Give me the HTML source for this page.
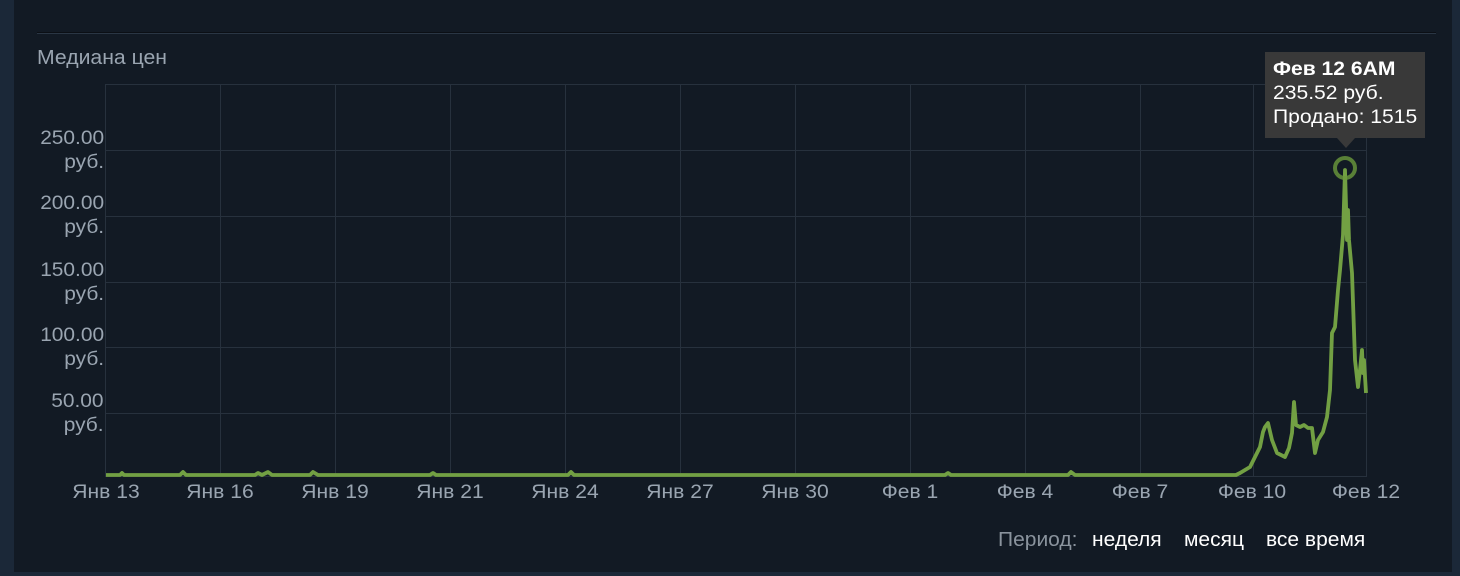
<!DOCTYPE html>
<html><head><meta charset="utf-8"><style>
html,body{margin:0;padding:0;width:1460px;height:576px;overflow:hidden;background:#1b2838;font-family:"Liberation Sans",sans-serif;}
#p{position:absolute;left:14px;top:0;width:1438px;height:572px;background:#121a24;}
#hr{position:absolute;left:37px;top:32px;width:1399px;height:1px;background:#2a3644;border-top:1px solid #0b0f15;}
.t{position:absolute;color:#9aa5b1;font-size:20px;white-space:nowrap;transform:scaleX(1.06);transform-origin:0 0;}
.yl{position:absolute;right:1356px;text-align:right;color:#9aa5b1;font-size:19px;line-height:24px;transform:scaleX(1.1);transform-origin:100% 0;}
.xl{position:absolute;top:482px;color:#9aa5b1;font-size:19px;transform:translateX(-50%) scaleX(1.11);white-space:nowrap;}
#tip{position:absolute;left:1265px;top:52px;width:160px;height:86px;background:#393939;box-sizing:border-box;padding:6px 8px;}
#tip div{color:#fff;font-size:19px;line-height:24px;white-space:nowrap;transform:scaleX(1.11);transform-origin:0 0;}
#arr{position:absolute;left:1337px;top:138px;width:0;height:0;border-left:9px solid transparent;border-right:9px solid transparent;border-top:10px solid #393939;}
.per{position:absolute;top:529px;font-size:20px;color:#fff;transform:scaleX(1.05);transform-origin:0 0;white-space:nowrap;}
</style></head><body>
<div id="p"></div>
<div id="hr"></div>
<div class="t" style="left:37px;top:47px;">Медиана цен</div>
<svg width="1460" height="576" style="position:absolute;left:0;top:0">
<g stroke="#27313d" stroke-width="1" fill="none">
<rect x="105.5" y="84.5" width="1261" height="392"/>
<line x1="105" y1="150.5" x2="1366" y2="150.5"/>
<line x1="105" y1="216.5" x2="1366" y2="216.5"/>
<line x1="105" y1="282.5" x2="1366" y2="282.5"/>
<line x1="105" y1="347.5" x2="1366" y2="347.5"/>
<line x1="105" y1="413.5" x2="1366" y2="413.5"/>
<line x1="220.5" y1="84" x2="220.5" y2="477"/>
<line x1="335.5" y1="84" x2="335.5" y2="477"/>
<line x1="450.5" y1="84" x2="450.5" y2="477"/>
<line x1="565.5" y1="84" x2="565.5" y2="477"/>
<line x1="680.5" y1="84" x2="680.5" y2="477"/>
<line x1="795.5" y1="84" x2="795.5" y2="477"/>
<line x1="910.5" y1="84" x2="910.5" y2="477"/>
<line x1="1025.5" y1="84" x2="1025.5" y2="477"/>
<line x1="1140.5" y1="84" x2="1140.5" y2="477"/>
<line x1="1253.5" y1="84" x2="1253.5" y2="477"/>
</g>
<polyline fill="none" stroke="#72a043" stroke-width="3.8" stroke-linejoin="round" points="106,475 120,475 122,473 124,475 180,475 183,472 186,475 255,475 258,473 262,475 268,472 272,475 310,475 313,472 318,475 430,475 433,473 436,475 568,475 571,472 574,475 945,475 948,473 951,475 1068,475 1071,472 1075,475 1236,475 1240,473 1250,467 1256,455 1260,447 1263,432 1265,427 1268,423 1272,440 1277,453 1285,457 1289,448 1292,433 1294,402 1296,425 1300,427 1304,425 1308,428 1312,428 1315,453 1318,440 1323,432 1327,417 1330,390 1332,333 1335,327 1338,290 1340,270 1343,235 1345,170 1347,240 1348,210 1349,240 1352,273 1355,360 1358,387 1360,370 1362,350 1363,373 1364,360 1366,393"/>
<circle cx="1345" cy="168" r="10" fill="none" stroke="#6b9a3c" stroke-opacity="0.8" stroke-width="4"/>
</svg>
<div class="yl" style="top:127px;">250.00<br>руб.</div>
<div class="yl" style="top:192px;">200.00<br>руб.</div>
<div class="yl" style="top:259px;">150.00<br>руб.</div>
<div class="yl" style="top:324px;">100.00<br>руб.</div>
<div class="yl" style="top:390px;">50.00<br>руб.</div>
<div class="xl" style="left:106px;">Янв 13</div>
<div class="xl" style="left:220px;">Янв 16</div>
<div class="xl" style="left:335px;">Янв 19</div>
<div class="xl" style="left:450px;">Янв 21</div>
<div class="xl" style="left:565px;">Янв 24</div>
<div class="xl" style="left:680px;">Янв 27</div>
<div class="xl" style="left:795px;">Янв 30</div>
<div class="xl" style="left:910px;">Фев 1</div>
<div class="xl" style="left:1025px;">Фев 4</div>
<div class="xl" style="left:1140px;">Фев 7</div>
<div class="xl" style="left:1252px;">Фев 10</div>
<div class="xl" style="left:1366px;">Фев 12</div>
<div id="tip"><div><b>Фев 12 6AM</b></div><div>235.52 руб.</div><div>Продано: 1515</div></div>
<div id="arr"></div>
<div class="per" style="left:998px;color:#8a939d;">Период:</div>
<div class="per" style="left:1092px;">неделя</div>
<div class="per" style="left:1184px;">месяц</div>
<div class="per" style="left:1266px;">все время</div>
</body></html>
